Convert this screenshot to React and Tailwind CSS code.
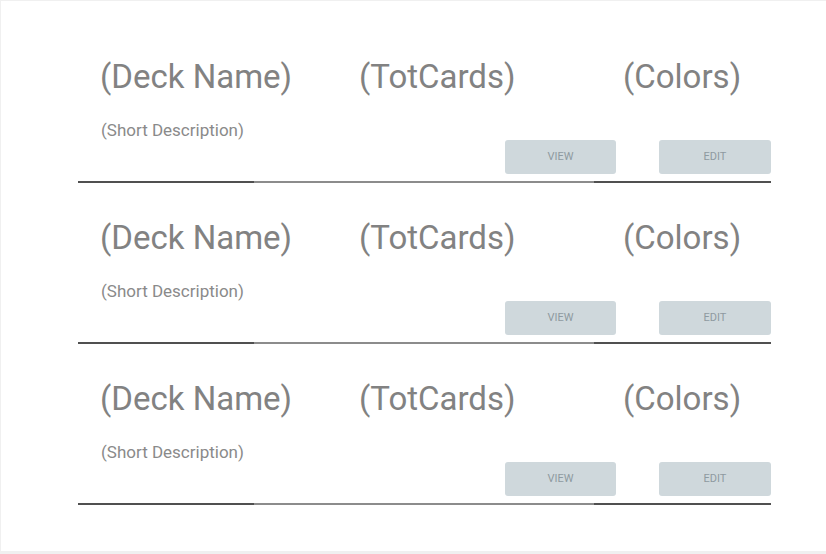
import React from "react";

const DECKS = [0, 1, 2];

function DeckRow() {
  return (
    <div className="flex flex-col">
      <div className="flex items-center pl-[22px] text-[33px] leading-[38px] text-[#828282]">
        <div className="w-[259px]">(Deck Name)</div>
        <div className="w-[264px]">(TotCards)</div>
        <div>(Colors)</div>
      </div>
      <div className="mt-[24px] pl-[23px] text-[17px] leading-[20px] text-[#8a8a8a]">
        (Short Description)
      </div>
      <div className="flex justify-end gap-[43px]">
        <button
          type="button"
          className="h-[34px] w-[111px] rounded-[3px] bg-[#cfd8dc] text-[11px] text-[#8e9aa0]"
        >
          VIEW
        </button>
        <button
          type="button"
          className="h-[34px] w-[112px] rounded-[3px] bg-[#cfd8dc] text-[11px] text-[#8e9aa0]"
        >
          EDIT
        </button>
      </div>
      {/* divider: darker at both ends */}
      <div className="mt-[7px] flex h-[2px]">
        <div className="w-[176px] bg-[#505050]" />
        <div className="w-[340px] bg-[#8c8c8c]" />
        <div className="flex-1 bg-[#505050]" />
      </div>
    </div>
  );
}

export default function App() {
  return (
    <div
      className="h-[554px] w-[826px] overflow-hidden bg-[#f0f0f0] pl-px pt-px"
      style={{ fontFamily: "Roboto, 'Liberation Sans', sans-serif" }}
    >
      <div className="h-[550px] bg-white pl-[77px] pr-[55px] pt-[57px]">
        <div className="flex flex-col gap-[36px]">
          {DECKS.map((i) => (
            <DeckRow key={i} />
          ))}
        </div>
      </div>
    </div>
  );
}
